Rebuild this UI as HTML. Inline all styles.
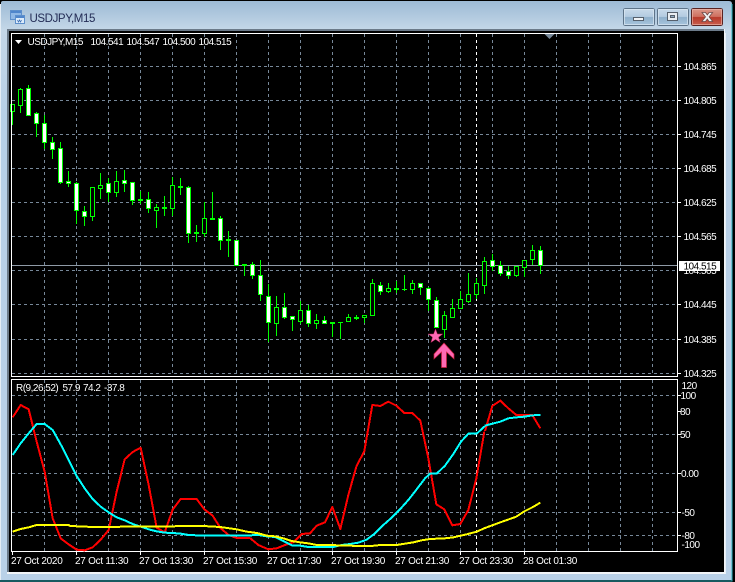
<!DOCTYPE html>
<html>
<head>
<meta charset="utf-8">
<title>USDJPY,M15</title>
<style>
html,body{margin:0;padding:0;background:#000;}
body{width:735px;height:582px;overflow:hidden;position:relative;}
svg{position:absolute;left:0;top:0;display:block;}
text{font-family:"Liberation Sans",sans-serif;font-size:10px;fill:#fff;letter-spacing:-.5px;}
.t text,text.tm{letter-spacing:-.27px;}
</style>
</head>
<body>
<svg width="735" height="582" viewBox="0 0 735 582" xmlns="http://www.w3.org/2000/svg">
<defs>
<linearGradient id="win" x1="0" y1="0" x2="0" y2="1">
<stop offset="0" stop-color="#9dbad5"/><stop offset=".05" stop-color="#c4d7e8"/><stop offset=".2" stop-color="#b7d0e8"/><stop offset="1" stop-color="#b9d1e8"/>
</linearGradient>
<linearGradient id="btn" x1="0" y1="0" x2="0" y2="1">
<stop offset="0" stop-color="#c9dbeb"/><stop offset=".48" stop-color="#b3cbe0"/><stop offset=".52" stop-color="#8fb0cb"/><stop offset="1" stop-color="#a9c6de"/>
</linearGradient>
<linearGradient id="cls" x1="0" y1="0" x2="0" y2="1">
<stop offset="0" stop-color="#dc9a8c"/><stop offset=".48" stop-color="#cf6f5f"/><stop offset=".52" stop-color="#b8392a"/><stop offset="1" stop-color="#c9604f"/>
</linearGradient>
</defs>

<!-- window chrome -->
<rect width="735" height="582" fill="#000"/>
<path d="M3 1H729Q732 1 732 4V580H1V3Q1 1 3 1Z" fill="url(#win)"/>
<path d="M732 4V581H0" fill="none" stroke="#2fb5c0" stroke-width="1"/>
<rect x="0" y="4" width="1" height="576" fill="#e4edf5"/>
<rect x="725" y="33" width="1" height="541" fill="#e8f0f7"/>
<rect x="7" y="29" width="718" height="545" fill="#f2f5f8"/>
<rect x="7" y="29" width="717" height="543" fill="#6b7a89"/>
<rect x="9" y="31" width="715" height="541" fill="#000"/>

<!-- title icon and text -->
<g>
<rect x="10.5" y="10.5" width="11" height="9" fill="#8fb8e6" stroke="#5d8fcb"/>
<rect x="15.5" y="15.5" width="9" height="8" fill="#dcebfa" stroke="#5d8fcb"/>
<rect x="11" y="11" width="10" height="2" fill="#4f86cc"/>
<rect x="16" y="16" width="8" height="2" fill="#4f86cc"/>
<path d="M17.5 20l1 2 1-2 1 2 1-2" fill="none" stroke="#3b6fb5" stroke-width=".8"/>
</g>
<text x="29.5" y="22" style="font-size:11.5px;fill:#232c55;letter-spacing:-.4px">USDJPY,M15</text>

<!-- buttons -->
<g shape-rendering="crispEdges">
<rect x="623.5" y="8.5" width="31" height="17" rx="2" fill="url(#btn)" stroke="#5e7489"/>
<rect x="624.5" y="9.5" width="29" height="15" fill="none" stroke="#dce8f2" stroke-opacity=".7"/>
<rect x="633.5" y="17.5" width="10" height="3" fill="#f0f3f6" stroke="#56606c"/>
<rect x="657.5" y="8.5" width="31" height="17" rx="2" fill="url(#btn)" stroke="#5e7489"/>
<rect x="658.5" y="9.5" width="29" height="15" fill="none" stroke="#dce8f2" stroke-opacity=".7"/>
<rect x="667.5" y="12.5" width="10" height="8" fill="#e8edf2" stroke="#56606c"/>
<rect x="670.5" y="15.5" width="4" height="2" fill="#8ea9c1" stroke="#56606c"/>
<rect x="691.5" y="8.5" width="31" height="17" rx="2" fill="url(#cls)" stroke="#5a2422"/>
<rect x="692.5" y="9.5" width="29" height="15" fill="none" stroke="#eebcb0" stroke-opacity=".6"/>
</g>
<path d="M702 12.5h3.5l1.8 2.4 1.8-2.4h3.5l-3.5 4.4 3.6 4.6h-3.6l-1.8-2.5-1.8 2.5h-3.6l3.6-4.6z" fill="#f1f2f3" stroke="#6d4a48" stroke-width=".8"/>

<!-- grid -->
<g fill="none" stroke="#778899" stroke-width="1" stroke-dasharray="3 3" shape-rendering="crispEdges">
<path d="M12 66.5H677M12 100.5H677M12 134.5H677M12 168.5H677M12 202.5H677M12 236.5H677M12 270.5H677M12 304.5H677M12 339.5H677M12 373.5H677"/>
<path d="M44.5 34V376M76.5 34V376M108.5 34V376M140.5 34V376M172.5 34V376M204.5 34V376M236.5 34V376M268.5 34V376M300.5 34V376M332.5 34V376M364.5 34V376M396.5 34V376M428.5 34V376M460.5 34V376M492.5 34V376M524.5 34V376M556.5 34V376M588.5 34V376M620.5 34V376M652.5 34V376"/>
<path d="M12 395.5H677M12 434.5H677M12 473.5H677M12 512.5H677M12 535.5H677"/>
<path d="M44.5 380V551M76.5 380V551M108.5 380V551M140.5 380V551M172.5 380V551M204.5 380V551M236.5 380V551M268.5 380V551M300.5 380V551M332.5 380V551M364.5 380V551M396.5 380V551M428.5 380V551M460.5 380V551M492.5 380V551M524.5 380V551M556.5 380V551M588.5 380V551M620.5 380V551M652.5 380V551"/>
</g>
<path d="M476.5 34V376M476.5 380V551" stroke="#fff" stroke-width="1" stroke-dasharray="3 3" fill="none" shape-rendering="crispEdges"/>
<!-- price line -->
<rect x="12" y="265" width="665" height="1" fill="#8f9aa6"/>
<!-- shift marker -->
<path d="M544.5 34h10l-5 5z" fill="#778899"/>

<!-- candle wicks -->
<path fill="none" stroke="#00ff00" stroke-width="1" shape-rendering="crispEdges" d="M12.5 104V125M20.5 88V113M28.5 85V116M36.5 112V137M44.5 115V149M52.5 137V159M60.5 142V184M68.5 171V187M76.5 182V224M84.5 206V226M92.5 187V221M100.5 173V199M108.5 178V202M116.5 171V197M124.5 170V192M132.5 182V205M140.5 191V204M148.5 192V213M156.5 204V228M164.5 196V216M172.5 177V216M180.5 178V195M188.5 186V243M196.5 225V242M204.5 202V237M212.5 192V219M220.5 216V250M228.5 231V257M236.5 240V265M244.5 265V276M252.5 262V279M260.5 260V301M268.5 284V342M276.5 296V336M284.5 293V319M292.5 316V331M300.5 301V324M308.5 305V327M316.5 314V329M324.5 316V323M332.5 323V337M340.5 322V339M348.5 314V321M356.5 315V320M364.5 315V323M372.5 279V315M380.5 282V295M388.5 283V293M396.5 281V293M404.5 275V291M412.5 280V294M420.5 283V295M428.5 287V311M436.5 297V327M444.5 311V338M452.5 299V317M460.5 291V309M468.5 273V303M476.5 278V299M484.5 257V294M492.5 254V271M500.5 261V276M508.5 266V279M516.5 266V277M524.5 260V277M532.5 245V265M540.5 246V274"/>
<!-- doji -->
<path fill="#00ff00" shape-rendering="crispEdges" d="M138 199h5v2h-5zM162 207h5v2h-5zM178 186h5v2h-5zM194 232h5v2h-5zM210 218h5v2h-5zM226 239h5v2h-5zM242 264h5v2h-5zM330 322h5v2h-5zM338 322h5v1h-5zM354 317h5v2h-5zM394 288h5v2h-5zM402 289h5v1h-5z"/>
<!-- white bodies -->
<path fill="#fff" stroke="#00ff00" stroke-width="1" shape-rendering="crispEdges" d="M26.5 88.5h4v27h-4zM34.5 113.5h4v10h-4zM42.5 123.5h4v19h-4zM50.5 142.5h4v7h-4zM58.5 148.5h4v34h-4zM66.5 181.5h4v2h-4zM74.5 183.5h4v27h-4zM82.5 211.5h4v5h-4zM106.5 183.5h4v9h-4zM122.5 180.5h4v3h-4zM130.5 182.5h4v18h-4zM146.5 199.5h4v9h-4zM186.5 187.5h4v46h-4zM218.5 218.5h4v22h-4zM234.5 240.5h4v25h-4zM250.5 264.5h4v11h-4zM258.5 275.5h4v19h-4zM266.5 296.5h4v26h-4zM282.5 307.5h4v10h-4zM290.5 316.5h4v3h-4zM306.5 310.5h4v13h-4zM322.5 320.5h4v3h-4zM378.5 285.5h4v6h-4zM418.5 283.5h4v4h-4zM426.5 288.5h4v11h-4zM434.5 300.5h4v27h-4zM490.5 260.5h4v6h-4zM498.5 265.5h4v8h-4zM506.5 271.5h4v4h-4zM538.5 250.5h4v15h-4z"/>
<!-- hollow bodies -->
<path fill="#000" stroke="#00ff00" stroke-width="1" shape-rendering="crispEdges" d="M10.5 104.5h4v7h-4zM18.5 89.5h4v16h-4zM90.5 187.5h4v29h-4zM98.5 185.5h4v3h-4zM114.5 181.5h4v11h-4zM154.5 207.5h4v3h-4zM170.5 185.5h4v23h-4zM202.5 218.5h4v15h-4zM274.5 307.5h4v16h-4zM298.5 310.5h4v11h-4zM314.5 320.5h4v3h-4zM346.5 317.5h4v4h-4zM362.5 315.5h4v2h-4zM370.5 283.5h4v32h-4zM386.5 288.5h4v3h-4zM410.5 283.5h4v6h-4zM442.5 315.5h4v14h-4zM450.5 308.5h4v9h-4zM458.5 299.5h4v9h-4zM466.5 294.5h4v7h-4zM474.5 283.5h4v11h-4zM482.5 261.5h4v24h-4zM514.5 266.5h4v9h-4zM522.5 260.5h4v7h-4zM530.5 250.5h4v9h-4z"/>

<!-- star and arrow -->
<path d="M435.5 329l1.9 5h5.4l-4.3 3.2 1.6 5.3-4.6-3.1-4.6 3.1 1.6-5.3-4.3-3.2h5.4z" fill="#ff69b4" stroke="#b02050" stroke-width=".5"/>
<path d="M444 343L454 354V359L446.5 352V367.5H441.5V352L434 359V354Z" fill="#ff69b4" stroke="#c81e3c" stroke-width=".7"/>

<!-- frames -->
<g fill="none" stroke="#fff" stroke-width="1" shape-rendering="crispEdges">
<path d="M11.5 33.5H677.5V376.5H11.5Z"/>
<path d="M11.5 379.5H677.5V551.5H11.5Z"/>
<path d="M678 66.5h3M678 100.5h3M678 134.5h3M678 168.5h3M678 202.5h3M678 236.5h3M678 304.5h3M678 339.5h3M678 373.5h3"/>
<path d="M678 395.5h3M678 411.5h3M678 434.5h3M678 473.5h3M678 512.5h3M678 535.5h3"/>
<path d="M12.5 552v3M76.5 552v3M140.5 552v3M204.5 552v3M268.5 552v3M332.5 552v3M396.5 552v3M460.5 552v3M524.5 552v3"/>
</g>

<!-- indicator lines -->
<g fill="none" stroke-width="6" stroke-linejoin="round" shape-rendering="crispEdges">
<g transform="translate(0,375) scale(.33333)">
<polyline stroke="#ff0000" points="38,127 62,90 86,103 110,200 134,290 158,430 182,490 206,508 230,524 254,526 278,517 302,494 326,465 350,350 374,253 398,231 422,218 446,330 470,458 494,472 518,404 542,372 590,372 614,404 638,422 662,460 686,480 710,489 750,489"/>
</g>
<g transform="translate(250,375) scale(.33333)">
<polyline stroke="#ff0000" points="0,489 25,510 55,523 80,520 105,510 130,502 155,477 180,475 200,452 225,442 247,396 271,462 295,360 319,275 343,228 367,90 391,93 415,80 439,92 463,114 487,114 511,137 535,250 559,388 583,403 607,451 631,447 655,405 679,310 703,170"/>
</g>
<g transform="translate(485,375) scale(.33333)">
<polyline stroke="#ff0000" points="0,168 22,93 46,77 70,100 94,120 118,120 142,120 166,160"/>
</g>
<g transform="translate(0,375) scale(.33333)">
<polyline stroke="#00ffff" points="38,240 62,205 86,175 110,147 134,147 158,165 182,208 206,255 230,303 254,340 278,372 302,395 326,412 350,427 374,436 398,447 422,455 446,463 470,469 494,473 518,474 542,476 566,480 590,481 750,481"/>
</g>
<g transform="translate(250,375) scale(.33333)">
<polyline stroke="#00ffff" points="0,481 25,480 50,484 75,486 100,498 125,511 150,512 175,516 250,516 275,510 300,507 325,503 350,494 375,475 400,450 425,428 450,403 475,375 500,343 525,310 540,296 560,296 585,272 610,237 633,200 655,176 680,176 705,153"/>
</g>
<g transform="translate(485,375) scale(.33333)">
<polyline stroke="#00ffff" points="0,152 22,146 46,140 70,130 94,127 118,125 142,121 166,120"/>
</g>
<g transform="translate(0,375) scale(.33333)">
<polyline stroke="#ffff00" points="38,470 62,462 86,457 110,450 206,450 210,453 280,456 610,453 660,456 710,463 740,470 750,471"/>
</g>
<g transform="translate(250,375) scale(.33333)">
<polyline stroke="#ffff00" points="0,471 25,475 50,482 75,484 100,490 125,498 150,502 175,505 200,510 275,511 325,513 365,513 390,510 440,510 490,502 515,496 540,492 585,490 610,487 650,478 680,470 705,459"/>
</g>
<g transform="translate(485,375) scale(.33333)">
<polyline stroke="#ffff00" points="0,459 46,442 94,425 118,409 142,397 166,383"/>
</g>
</g>

<!-- header labels -->
<path d="M15 40h7l-3.5 4z" fill="#fff"/>
<text x="27.5" y="45">USDJPY,M15</text>
<text x="90.5" y="45">104.541</text>
<text x="126.5" y="45">104.547</text>
<text x="162.5" y="45">104.500</text>
<text x="198.5" y="45">104.515</text>
<text x="16" y="391">R(9,26,52)</text>
<text x="62.5" y="391">57.9</text>
<text x="83" y="391">74.2</text>
<text x="104" y="391">-37.8</text>

<!-- price axis -->
<text x="683.5" y="70">104.865</text>
<text x="683.5" y="104">104.805</text>
<text x="683.5" y="138">104.745</text>
<text x="683.5" y="172">104.685</text>
<text x="683.5" y="206">104.625</text>
<text x="683.5" y="240">104.565</text>
<text x="683.5" y="274">104.505</text>
<text x="683.5" y="308">104.445</text>
<text x="683.5" y="343">104.385</text>
<text x="683.5" y="377">104.325</text>
<rect x="679" y="261" width="41" height="10" fill="#fff"/>
<text x="683.5" y="269.5" style="fill:#000">104.515</text>

<!-- sub-window axis -->
<text x="681.5" y="389">120</text>
<text x="680.5" y="399">100</text>
<text x="680" y="415">80</text>
<text x="680" y="438">50</text>
<text x="681" y="477">0.00</text>
<text x="681.5" y="516">-50</text>
<text x="681.5" y="539">-80</text>
<text x="681.5" y="548">-100</text>

<!-- time axis -->
<g class="t">
<text x="11" y="564">27 Oct 2020</text>
<text x="75" y="564">27 Oct 11:30</text>
<text x="139" y="564">27 Oct 13:30</text>
<text x="203" y="564">27 Oct 15:30</text>
<text x="267" y="564">27 Oct 17:30</text>
<text x="331" y="564">27 Oct 19:30</text>
<text x="395" y="564">27 Oct 21:30</text>
<text x="459" y="564">27 Oct 23:30</text>
<text x="523" y="564">28 Oct 01:30</text>
</g>
</svg>
</body>
</html>
